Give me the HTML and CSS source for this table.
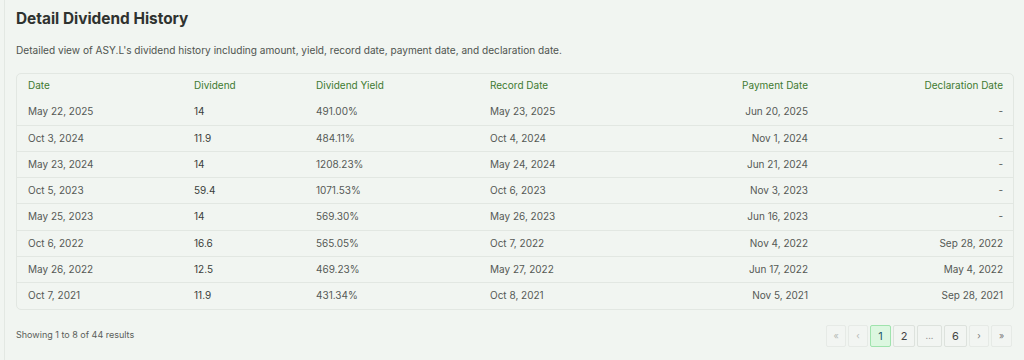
FILE: index.html
```html
<!DOCTYPE html>
<html>
<head>
<meta charset="utf-8">
<link rel="stylesheet" href="styles.css">
</head>
<body>
<div class="frame">
  <section class="panel">
    <h2 class="title">Detail Dividend History</h2>
    <p class="desc">Detailed view of ASY.L's dividend history including amount, yield, record date, payment date, and declaration date.</p>
    <div class="table-wrap">
      <table class="tbl">
        <colgroup>
          <col class="c1"><col class="c2"><col class="c3"><col class="c4"><col class="c5"><col class="c6">
        </colgroup>
        <thead>
          <tr><th>Date</th><th>Dividend</th><th>Dividend Yield</th><th>Record Date</th><th class="r">Payment Date</th><th class="r">Declaration Date</th></tr>
        </thead>
        <tbody>
          <tr><td>May 22, 2025</td><td class="amt">14</td><td>491.00%</td><td>May 23, 2025</td><td class="r">Jun 20, 2025</td><td class="r">-</td></tr>
          <tr><td>Oct 3, 2024</td><td class="amt">11.9</td><td>484.11%</td><td>Oct 4, 2024</td><td class="r">Nov 1, 2024</td><td class="r">-</td></tr>
          <tr><td>May 23, 2024</td><td class="amt">14</td><td>1208.23%</td><td>May 24, 2024</td><td class="r">Jun 21, 2024</td><td class="r">-</td></tr>
          <tr><td>Oct 5, 2023</td><td class="amt">59.4</td><td>1071.53%</td><td>Oct 6, 2023</td><td class="r">Nov 3, 2023</td><td class="r">-</td></tr>
          <tr><td>May 25, 2023</td><td class="amt">14</td><td>569.30%</td><td>May 26, 2023</td><td class="r">Jun 16, 2023</td><td class="r">-</td></tr>
          <tr><td>Oct 6, 2022</td><td class="amt">16.6</td><td>565.05%</td><td>Oct 7, 2022</td><td class="r">Nov 4, 2022</td><td class="r">Sep 28, 2022</td></tr>
          <tr><td>May 26, 2022</td><td class="amt">12.5</td><td>469.23%</td><td>May 27, 2022</td><td class="r">Jun 17, 2022</td><td class="r">May 4, 2022</td></tr>
          <tr><td>Oct 7, 2021</td><td class="amt">11.9</td><td>431.34%</td><td>Oct 8, 2021</td><td class="r">Nov 5, 2021</td><td class="r">Sep 28, 2021</td></tr>
        </tbody>
      </table>
    </div>
    <div class="footer">
      <span class="count">Showing 1 to 8 of 44 results</span>
      <nav class="pager">
        <span class="pg dis w20">«</span>
        <span class="pg dis w20">‹</span>
        <span class="pg active w21">1</span>
        <span class="pg w22">2</span>
        <span class="pg dots w25">...</span>
        <span class="pg w23">6</span>
        <span class="pg arrow w20">›</span>
        <span class="pg arrow w21">»</span>
      </nav>
    </div>
  </section>
</div>
</body>
</html>
```
FILE: styles.css
```css
html, body {
  margin: 0;
  padding: 0;
  background: #f1f5f1;
  font-family: Inter, "Noto Sans", sans-serif;
  color: #4b4f4b;
}
.frame {
  margin-left: 4px;
  border-left: 1px solid #e3e8e3;
  min-height: 360px;
}
.panel {
  padding: 9px 10px 0 11px;
}
.title {
  margin: 0;
  font-size: 15.4px;
  line-height: 20px;
  font-weight: 700;
  color: #2f322f;
}
.desc {
  margin: 14px 0 0;
  font-size: 10.1px;
  line-height: 14px;
  color: #4f544f;
}
.table-wrap {
  margin-top: 16px;
  border: 1px solid #e2e7e2;
  border-radius: 5px;
  overflow: hidden;
}
.tbl {
  width: 100%;
  border-collapse: collapse;
  table-layout: fixed;
  font-size: 10px;
}
.c1 { width: 166px; }
.c2 { width: 122px; }
.c3 { width: 174px; }
.c4 { width: 169px; }
.c5 { width: 171px; }
.tbl th, .tbl td {
  text-align: left;
  padding: 6px 11px 6px;
  line-height: 13.3px;
  white-space: nowrap;
}
.tbl th {
  font-weight: 400;
  color: #3e7a30;
  padding-top: 5px;
  padding-bottom: 7px;
}
.tbl td {
  color: #555955;
}
.tbl tbody tr + tr td {
  border-top: 1px solid #e2e7e2;
}
.tbl td.amt { color: #3a3d3a; }
.tbl .r { text-align: right; }
.tbl th:last-child, .tbl td:last-child { padding-right: 10px; }
.footer {
  display: flex;
  justify-content: space-between;
  align-items: center;
  margin-top: 15px;
}
.count {
  font-size: 9px;
  color: #5a5e5a;
  margin-top: -2px;
}
.pager {
  display: flex;
  gap: 2px;
  margin-right: 2px;
}
.pg {
  box-sizing: border-box;
  display: flex;
  align-items: center;
  justify-content: center;
  height: 22px;
  border: 1px solid #dde2dd;
  border-radius: 2px;
  background: #f2f5f2;
  font-size: 11px;
  color: #444;
}
.w20 { width: 20px; }
.w21 { width: 21px; }
.w22 { width: 22px; }
.w23 { width: 23px; }
.w25 { width: 25px; }
.pg.dis { color: #b6bab6; font-size: 9px; border-color: #e6eae6; }
.pg.arrow { color: #777; font-size: 9px; border-color: #e6eae6; }
.pg.active {
  background: #dcf7e0;
  border-color: #9fe3ad;
  color: #1f5a6a;
}
.pg.dots { color: #999; font-size: 9px; }
```
